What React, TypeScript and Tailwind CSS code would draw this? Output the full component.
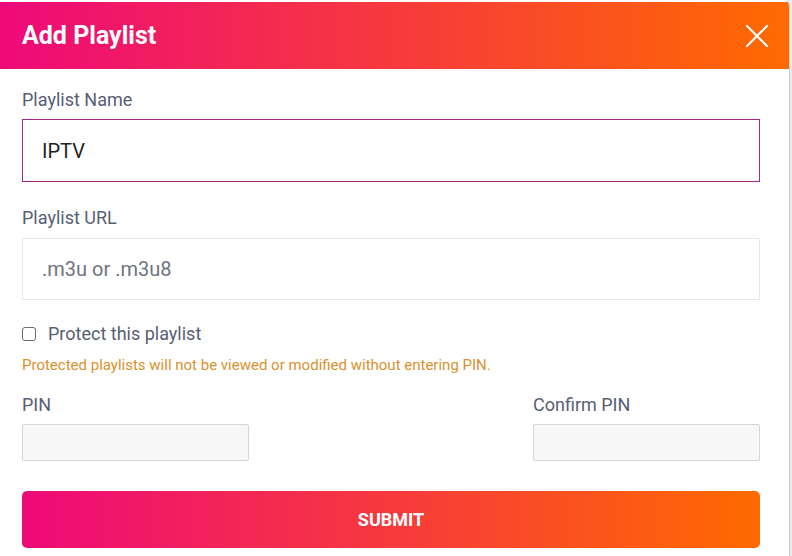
export default function App() {
  return (
    <div className="w-[792px] h-[556px] bg-[#ececec] overflow-hidden" style={{ fontFamily: "Roboto, 'Liberation Sans', sans-serif" }}>
      <div className="w-[790px] h-[556px] bg-white rounded-tr-[6px] border-r border-[#cfcfcf] overflow-hidden">
        {/* Header */}
        <div className="h-[67px] mt-[2px] flex items-center justify-between pl-[22px] pr-[20px] bg-linear-to-r/srgb from-[#ee0979] to-[#ff6a00]">
          <h1 className="text-white text-[25px] font-bold leading-none">Add Playlist</h1>
          <svg width="24" height="24" viewBox="0 0 24 24" fill="none" stroke="white" strokeWidth="2.2" strokeLinecap="round">
            <path d="M2 2 L22 22 M22 2 L2 22" />
          </svg>
        </div>

        {/* Body */}
        <div className="pl-[22px] pr-[29px] pt-[21px] text-[#566073]">
          <label className="block text-[18px] leading-[20px]">Playlist Name</label>
          <div className="mt-[9px] h-[63px] border border-[#a3288b] flex items-center px-[19px] text-[20px] text-[#222]">
            IPTV
          </div>

          <label className="block mt-[26px] text-[18px] leading-[20px]">Playlist URL</label>
          <div className="mt-[10px] h-[62px] border border-[#e8e8e8] flex items-center px-[19px] text-[20px] text-[#6e7480]">
            .m3u or .m3u8
          </div>

          <div className="mt-[24px] flex items-center gap-[12px] h-[20px]">
            <span className="w-[14px] h-[14px] border border-[#6b6b6b] rounded-[3px] bg-white" />
            <span className="text-[18px] leading-[20px]">Protect this playlist</span>
          </div>
          <p className="mt-[12px] text-[15px] leading-[18px] text-[#d9922e]">
            Protected playlists will not be viewed or modified without entering PIN.
          </p>

          <div className="mt-[21px] flex justify-between">
            <div className="w-[227px]">
              <label className="block text-[18px] leading-[20px]">PIN</label>
              <div className="mt-[9px] h-[37px] bg-[#f7f7f7] border border-[#d6d6d6] rounded-[2px]" />
            </div>
            <div className="w-[227px]">
              <label className="block text-[18px] leading-[20px]">Confirm PIN</label>
              <div className="mt-[9px] h-[37px] bg-[#f7f7f7] border border-[#d6d6d6] rounded-[2px]" />
            </div>
          </div>

          <button className="mt-[30px] w-full h-[57px] rounded-[5px] bg-linear-to-r/srgb from-[#ee0979] to-[#ff6a00] text-white text-[18px] font-bold">
            SUBMIT
          </button>
        </div>
      </div>
    </div>
  );
}
